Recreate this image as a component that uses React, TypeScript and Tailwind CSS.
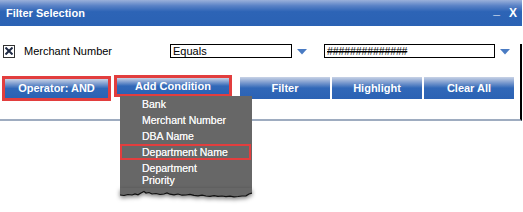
import React from "react";

const FONT = { fontFamily: '"Liberation Sans", Arial, sans-serif' };

const MENU_ITEMS = ["Bank", "Merchant Number", "DBA Name", "Department Name"];

// torn paper edge at the bottom of the dropdown (coords relative to svg)
const EDGE =
  "0,7 4,7.5 8,6.5 12,7 15,6 18,6.8 21,5 24,3.5 26,5 29,4.5 32,6 36,5.5 40,6.5 44,6 47,5 50,6.2 54,6.8 58,6 62,7.2 66,7 70,6.4 74,7.4 78,7.8 82,7.2 86,8 90,8.3 94,7.6 98,8.4 102,8 106,8.6 110,8.2 114,8.8 118,8.5 122,8 126,7.8 129,6 132,5";

function Arrow() {
  return (
    <svg width="10" height="6" viewBox="0 0 10 6" className="shrink-0">
      <polygon points="0,0 10,0 5,5.5" fill="#4a7bc3" />
    </svg>
  );
}

function BlueButton({
  label,
  className = "",
}: {
  label: string;
  className?: string;
}) {
  return (
    <div
      className={`flex items-center justify-center bg-[linear-gradient(to_bottom,#c9d3e6_0%,#7d9ccf_25%,#3168b8_50%,#2b62b4_100%)] text-[11px] font-bold text-white ${className}`}
    >
      {label}
    </div>
  );
}

export default function App() {
  return (
    <div className="relative h-[212px] w-[523px] overflow-hidden bg-white" style={FONT}>
      {/* window */}
      <div className="w-[522px]">
        <div className="flex h-[26px] items-center bg-[linear-gradient(to_bottom,#9bb1da_0%,#5a82c6_22%,#2d64b6_45%,#2b62b4_100%)] pl-[6px] text-white">
          <span className="flex-1 text-[11px] font-bold leading-none">Filter Selection</span>
          <span className="relative -top-[3px] text-[12px] font-bold leading-none">_</span>
          <span className="ml-[9px] mr-[5px] text-[12px] font-bold leading-none">X</span>
        </div>

        <div className="h-[77px] border-r-2 border-b-2 border-r-black border-b-[#9eacc0]">
          {/* condition row */}
          <div className="mt-[18px] flex h-[14px] items-center">
            <div className="ml-[3px] flex h-[13px] w-[12px] items-center justify-center border border-[#333]">
              <svg width="8" height="8" viewBox="0 0 8 8">
                <path d="M0.5 0.5 L7.5 7.5 M7.5 0.5 L0.5 7.5" stroke="#1f2a44" strokeWidth="2" />
              </svg>
            </div>
            <span className="ml-[9px] w-[146px] text-[11px] leading-none text-black">
              Merchant Number
            </span>
            <div className="flex h-[14px] w-[122px] items-center border border-black pl-[2px] text-[11px] leading-none text-black">
              Equals
            </div>
            <div className="ml-[5px] mr-[17px] pt-[2px]">
              <Arrow />
            </div>
            <div className="flex h-[14px] w-[171px] items-center border border-black pl-[2px] text-[10.5px] leading-none tracking-[-0.1px] text-black line-through">
              ##############
            </div>
            <div className="ml-[5px] pt-[2px]">
              <Arrow />
            </div>
          </div>

          {/* button row */}
          <div className="mt-[18px] flex items-start pl-[2px]">
            <div className="h-[25px] w-[109px] border-[3px] border-[#e23e3e]">
              <BlueButton label="Operator: AND" className="h-full w-full" />
            </div>
            <div className="-mt-[1px] ml-[3px] h-[22px] w-[118px] border-[3px] border-[#e23e3e]">
              <BlueButton label="Add Condition" className="h-full w-full" />
            </div>
            <div className="mt-[1px] ml-[8px] flex gap-[2px]">
              <BlueButton label="Filter" className="h-[22px] w-[90px]" />
              <BlueButton label="Highlight" className="h-[22px] w-[90px]" />
              <BlueButton label="Clear All" className="h-[22px] w-[90px]" />
            </div>
          </div>
        </div>
      </div>

      {/* dropdown menu over the panel */}
      <div className="absolute top-[96px] left-[120px] w-[132px]">
        <div className="bg-[#676767] text-[10.5px] leading-[16px] text-[#f4f4f4] [text-shadow:0_0_0.4px_#fff]">
          {MENU_ITEMS.map((item) =>
            item === "Department Name" ? (
              <div key={item} className="h-[16px] w-[131px] border-2 border-[#e23e3e] pl-[20px] leading-[12px]">
                {item}
              </div>
            ) : (
              <div key={item} className="h-[16px] pl-[22px]">
                {item}
              </div>
            ),
          )}
          <div className="pt-[2px] pl-[22px] leading-[12px]">
            Department
            <br />
            Priority
          </div>
          <div className="h-[2px]" />
        </div>
        <svg
          width="132"
          height="16"
          viewBox="0 0 132 16"
          className="block"
          style={{ filter: "drop-shadow(0 2px 2px rgba(0,0,0,0.5))" }}
        >
          <polygon points={`0,0 132,0 ${EDGE.split(" ").reverse().join(" ")}`} fill="#676767" />
          <polyline points={EDGE} fill="none" stroke="#111" strokeWidth="1.2" />
        </svg>
      </div>
    </div>
  );
}
